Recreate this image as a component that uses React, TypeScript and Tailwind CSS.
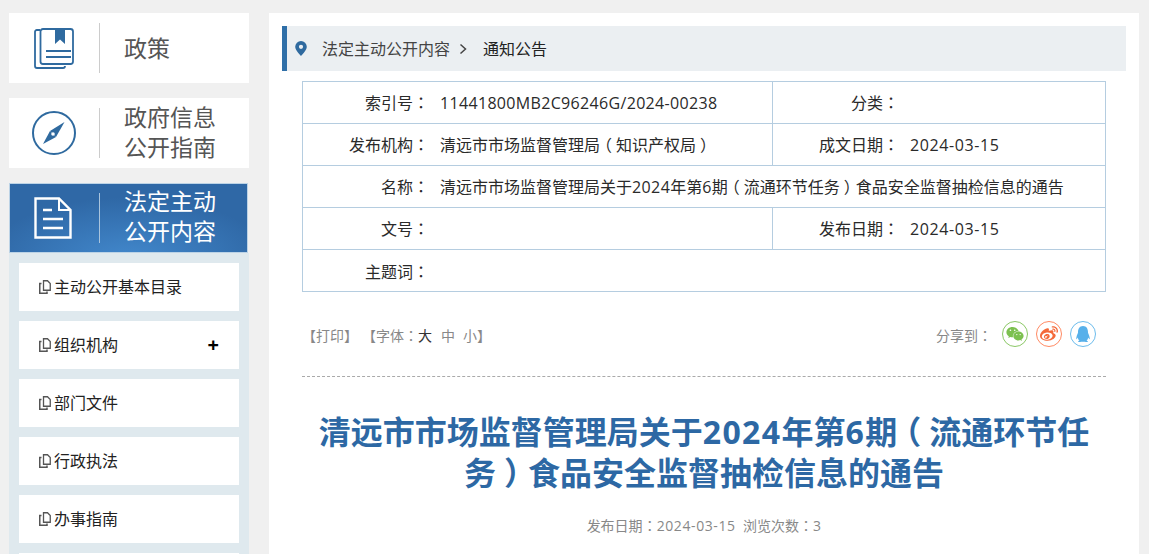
import { FaWeixin, FaWeibo, FaQq } from "react-icons/fa";

const font = { fontFamily: '"Open Sans","Noto Sans CJK SC",sans-serif' };

function latinClass(p: string, wide?: boolean) {
  if (wide) return "inline-block tracking-[1.400px]";
  if (p.length > 20) return "tracking-[0.330px]";
  if (p.includes("-")) return "tracking-[0.600px]";
  return "tracking-[0.400px]";
}

function T({ s, wide }: { s: string; wide?: boolean }) {
  const parts = s.split(/([A-Za-z0-9\/\-]+|[：（）])/).filter(Boolean);
  return (
    <>
      {parts.map((p, i) =>
        p === "（" || p === "）" ? (
          <span key={i} className="mx-[0.250em] inline-block [font-feature-settings:'halt']">{p}</span>
        ) : p === "：" ? (
          <span key={i} className="font-['Noto_Sans_CJK_TC']">{p}</span>
        ) : /[A-Za-z0-9]/.test(p) ? (
          <span key={i} className={latinClass(p, wide)}>{p}</span>
        ) : (
          <span key={i} className={wide ? "inline-block" : ""}>{p}</span>
        )
      )}
    </>
  );
}

function BookIcon() {
  return (
    <svg width="40" height="41" viewBox="0 0 40 41" fill="none" stroke="#2f6a9f">
      <path d="M6 2H2.800A1.800 1.800 0 0 0 1 3.800V38a2 2 0 0 0 2 2H29a2 2 0 0 0 2-2" strokeWidth="1.800" />
      <rect x="6.500" y="1" width="32.500" height="35" rx="2.500" strokeWidth="1.800" fill="#fff" />
      <path d="M21 1h10v15l-5-4.500-5 4.500z" fill="#2f6a9f" stroke="none" />
      <path d="M12 23h25M12 29h25" strokeWidth="2" />
    </svg>
  );
}

function CompassIcon() {
  return (
    <svg width="44" height="44" viewBox="0 0 44 44" fill="none">
      <circle cx="22" cy="22" r="21" stroke="#2f6a9f" strokeWidth="2" />
      <path d="M32.500 11 L24 26 L18 20 Z" fill="#2f6a9f" />
      <path d="M11 33 L18 20 L24 26 Z" fill="#2f6a9f" />
      <circle cx="21" cy="23" r="1.800" fill="#fff" />
    </svg>
  );
}

function DocIcon() {
  return (
    <svg width="38" height="42" viewBox="0 0 38 42" fill="none" stroke="#fff" strokeWidth="2.400">
      <path d="M1.500 1.500H25L36.500 13V40.500H1.500Z" />
      <path d="M25 1.500V13H36.500" strokeWidth="2" />
      <path d="M9 13h9M9 22h20M9 31h20" />
    </svg>
  );
}

function FileIcon() {
  return (
    <svg width="12" height="14" viewBox="0 0 12 14" fill="none" stroke="#555" className="shrink-0">
      <path d="M4.500 .75H8.500L11.250 3.500V10.250H4.500Z" strokeWidth="1.300" />
      <path d="M2.500 3.500H.75V13.250H8V11.500" strokeWidth="1.500" />
    </svg>
  );
}

function PinIcon() {
  return (
    <svg width="12" height="15" viewBox="0 0 12 15" className="shrink-0">
      <path fillRule="evenodd" clipRule="evenodd" d="M6 0a5.800 5.800 0 0 1 5.800 5.800C11.800 9.500 6 15 6 15S.2 9.500.2 5.800A5.800 5.800 0 0 1 6 0Zm0 3.700a2.100 2.100 0 1 0 0 4.200 2.100 2.100 0 0 0 0-4.200Z" fill="#2f6a9f" />
    </svg>
  );
}

function TopCard({ icon, single, children }: { icon: React.ReactNode; single?: boolean; children: React.ReactNode }) {
  return (
    <div className="flex h-[70px] items-center bg-white">
      <div className="flex w-[90px] justify-center pr-[1px]">{icon}</div>
      <div className="h-[50px] w-px bg-[#cccccc]" />
      <div className={`pl-[24px] text-[23px] leading-[30px] text-[#555555] ${single ? "" : "pb-[2px]"}`}>{children}</div>
    </div>
  );
}

function SubItem({ label, plus }: { label?: string; plus?: boolean }) {
  return (
    <div className="flex h-[48px] shrink-0 items-center bg-white px-[20px] text-[16px] text-[#222222]">
      {label && <FileIcon />}
      <span className="ml-[3px] flex-1">{label}</span>
      {plus && <span className="text-[20px] font-bold leading-none text-black">+</span>}
    </div>
  );
}

function Row({ children, last }: { children: React.ReactNode; last?: boolean }) {
  return (
    <div className={`flex items-center text-[16px] text-[#2a2a2a] ${last ? "h-[41px] pt-px" : "h-[42px] border-b border-[#b5cde0]"}`}>
      {children}
    </div>
  );
}

function Label({ children }: { children: string }) {
  return (
    <div className="w-[126px] shrink-0 whitespace-nowrap text-right">
      <T s={children} />
    </div>
  );
}

function Share({ color, children }: { color: string; children: React.ReactNode }) {
  return (
    <div className="flex h-[26px] w-[26px] items-center justify-center rounded-full border" style={{ borderColor: color, color }}>
      {children}
    </div>
  );
}

export default function App() {
  return (
    <div className="flex h-[554px] items-start overflow-hidden bg-[#f0f0f0]" style={font}>
      <aside className="ml-[9px] flex w-[240px] shrink-0 flex-col pt-[13px]">
        <TopCard icon={<BookIcon />} single>政策</TopCard>
        <div className="h-[15px]" />
        <TopCard icon={<CompassIcon />}>
          政府信息
          <br />
          公开指南
        </TopCard>
        <div className="h-[15px]" />
        <div className="mr-px flex h-[70px] items-center border border-[#bcd3e6] bg-[radial-gradient(ellipse_60%_90%_at_50%_110%,#4288cc_0%,#2f68a6_100%)]">
          <div className="flex w-[89px] justify-center pr-[3px]">
            <DocIcon />
          </div>
          <div className="h-[50px] w-px bg-[#a9c4dd]" />
          <div className="pb-[5px] pl-[24px] text-[23px] leading-[30px] text-white">
            法定主动
            <br />
            公开内容
          </div>
        </div>
        <div className="flex flex-col gap-[10px] bg-[#dfe9ee] p-[10px]">
          <SubItem label="主动公开基本目录" />
          <SubItem label="组织机构" plus />
          <SubItem label="部门文件" />
          <SubItem label="行政执法" />
          <SubItem label="办事指南" />
          <SubItem />
        </div>
      </aside>

      <main className="mt-[13px] ml-[20px] h-[541px] w-[870px] shrink-0 overflow-hidden bg-white px-[13px] pt-[13px]">
        <div className="flex h-[45px] items-center border-l-[5px] border-[#2f6fa8] bg-[#ebeff2] pl-[8px]">
          <PinIcon />
          <span className="ml-[15px] text-[16px] text-[#444444]">法定主动公开内容</span>
          <svg width="9" height="12" viewBox="0 0 9 12" fill="none" stroke="#444" strokeWidth="1.500" className="ml-[9px]">
            <path d="M1.500 1.500 6.500 6l-5 4.500" />
          </svg>
          <span className="ml-[15px] text-[16px] text-[#222222]">通知公告</span>
        </div>

        <div className="mx-[20px] mt-[10px] border border-[#b5cde0]">
          <Row>
            <Label>索引号：</Label>
            <div className="ml-[11px] w-[332px]"><T s="11441800MB2C96246G/2024-00238" /></div>
            <div className="flex items-center self-stretch border-l border-[#b5cde0]">
              <div className="w-[126px] text-right"><T s="分类：" /></div>
            </div>
          </Row>
          <Row>
            <Label>发布机构：</Label>
            <div className="ml-[11px] w-[332px]"><T s="清远市市场监督管理局（知识产权局）" /></div>
            <div className="flex items-center self-stretch border-l border-[#b5cde0]">
              <div className="w-[126px] text-right"><T s="成文日期：" /></div>
              <div className="ml-[11px]"><T s="2024-03-15" /></div>
            </div>
          </Row>
          <Row>
            <Label>名称：</Label>
            <div className="ml-[11px] whitespace-nowrap"><T s="清远市市场监督管理局关于2024年第6期（流通环节任务）食品安全监督抽检信息的通告" /></div>
          </Row>
          <Row>
            <Label>文号：</Label>
            <div className="ml-[11px] w-[332px]" />
            <div className="flex items-center self-stretch border-l border-[#b5cde0]">
              <div className="w-[126px] text-right"><T s="发布日期：" /></div>
              <div className="ml-[11px]"><T s="2024-03-15" /></div>
            </div>
          </Row>
          <Row last>
            <Label>主题词：</Label>
          </Row>
        </div>

        <div className="mx-[20px] flex h-[85px] items-center justify-between border-b border-dashed border-[#aaaaaa]">
          <div className="flex items-center pt-[2px] text-[14px] text-[#888888]">
            <span>【打印】</span>
            <span className="ml-[4px]"><T s="【字体：" /></span>
            <span className="text-[#333333]">大</span>
            <span className="ml-[9px]">中</span>
            <span className="ml-[8px]">小</span>
            <span>】</span>
          </div>
          <div className="flex items-center pr-[10px]">
            <span className="mr-[10px] pt-[2px] text-[14px] text-[#888888]"><T s="分享到：" /></span>
            <div className="flex gap-[8px]">
              <Share color="#8bc866"><FaWeixin size={18} className="text-[#7cc04f]" /></Share>
              <Share color="#ff8a63"><FaWeibo size={18} className="text-[#f4693a]" /></Share>
              <Share color="#6cbcec"><FaQq size={16} className="text-[#57b0ea]" /></Share>
            </div>
          </div>
        </div>

        <h1 className="mx-[20px] mt-[34px] text-center text-[32px] font-bold leading-[41px] text-[#2d68a4]">
          <div className="whitespace-nowrap"><T wide s="清远市市场监督管理局关于2024年第6期（流通环节任" /></div>
          <div className="whitespace-nowrap"><T wide s="务）食品安全监督抽检信息的通告" /></div>
        </h1>
        <div className="mt-[22px] text-center text-[14px] text-[#888888]">
          <T s="发布日期：2024-03-15" />&nbsp;&nbsp;<T s="浏览次数：3" />
        </div>
      </main>
    </div>
  );
}
